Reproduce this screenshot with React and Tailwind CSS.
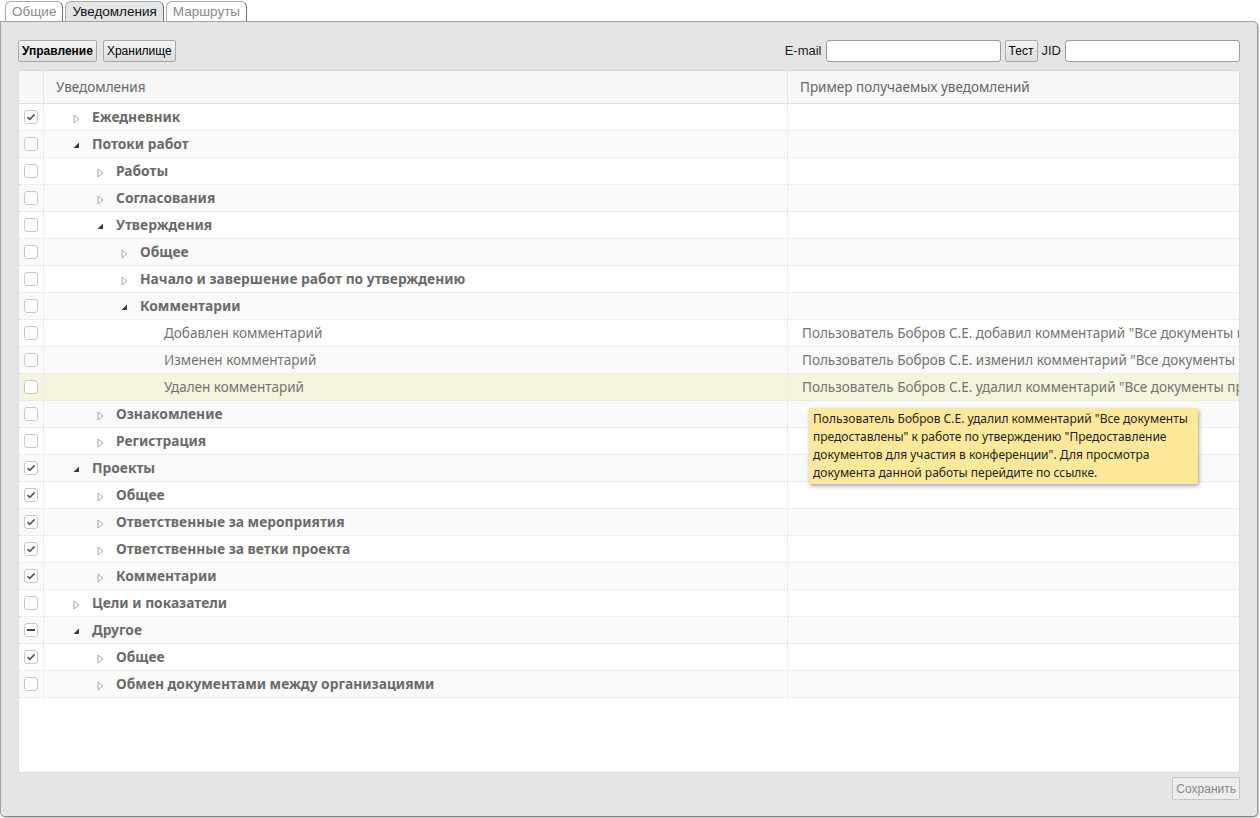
import React from "react";

const rows = [
  { t: "Ежедневник", l: 0, s: "c", ck: "y" },
  { t: "Потоки работ", l: 0, s: "e", ck: "n" },
  { t: "Работы", l: 1, s: "c", ck: "n" },
  { t: "Согласования", l: 1, s: "c", ck: "n" },
  { t: "Утверждения", l: 1, s: "e", ck: "n" },
  { t: "Общее", l: 2, s: "c", ck: "n" },
  { t: "Начало и завершение работ по утверждению", l: 2, s: "c", ck: "n" },
  { t: "Комментарии", l: 2, s: "e", ck: "n" },
  { t: "Добавлен комментарий", l: 3, s: "leaf", ck: "n", ex: "Пользователь Бобров С.Е. добавил комментарий \"Все документы предоставлены\" к работе по утверждению" },
  { t: "Изменен комментарий", l: 3, s: "leaf", ck: "n", ex: "Пользователь Бобров С.Е. изменил комментарий \"Все документы предоставлены\" к работе по утверждению" },
  { t: "Удален комментарий", l: 3, s: "leaf", ck: "n", hl: true, ex: "Пользователь Бобров С.Е. удалил комментарий \"Все документы предоставлены\" к работе по утверждению" },
  { t: "Ознакомление", l: 1, s: "c", ck: "n" },
  { t: "Регистрация", l: 1, s: "c", ck: "n" },
  { t: "Проекты", l: 0, s: "e", ck: "y" },
  { t: "Общее", l: 1, s: "c", ck: "y" },
  { t: "Ответственные за мероприятия", l: 1, s: "c", ck: "y" },
  { t: "Ответственные за ветки проекта", l: 1, s: "c", ck: "y" },
  { t: "Комментарии", l: 1, s: "c", ck: "y" },
  { t: "Цели и показатели", l: 0, s: "c", ck: "n" },
  { t: "Другое", l: 0, s: "e", ck: "p" },
  { t: "Общее", l: 1, s: "c", ck: "y" },
  { t: "Обмен документами между организациями", l: 1, s: "c", ck: "n" },
];

const padCls = ["pl-[29px]", "pl-[53px]", "pl-[77px]", "pl-[101px]"];

function Check({ v }) {
  return (
    <span className="w-[14px] h-[14px] rounded-[3px] border border-[#c8c8c8] bg-white flex items-center justify-center">
      {v === "y" && (
        <svg width="10" height="8" viewBox="0 0 10 8">
          <path d="M1.5 4.2 L3.8 6.3 L8.6 1.4" fill="none" stroke="#555" strokeWidth="1.6" />
        </svg>
      )}
      {v === "p" && <span className="w-[8px] h-[2px] bg-[#444]" />}
    </span>
  );
}

function Tri({ s }) {
  if (s === "leaf") return <span className="w-[19px] shrink-0" />;
  return (
    <span className="w-[19px] shrink-0 flex items-center pt-[3px]">
      {s === "c" ? (
        <svg width="7" height="10" viewBox="0 0 7 10">
          <polygon points="1,1 6,5 1,9" fill="#fff" stroke="#a6a6a6" strokeWidth="1" />
        </svg>
      ) : (
        <svg width="7" height="7" viewBox="0 0 7 7">
          <polygon points="6,0.5 6,6 0.5,6" fill="#3a3a3a" />
        </svg>
      )}
    </span>
  );
}

function Tab({ label, active }) {
  return (
    <div
      className={
        "h-[20px] px-[6px] flex items-center rounded-t-[6px] border border-b-0 border-[#a8a8a8] border-r-[#6f6f6f] text-[13.5px] leading-none " +
        (active ? "bg-[#e4e5e7] text-[#111]" : "bg-white text-[#8a8a8a]")
      }
    >
      {label}
    </div>
  );
}

export default function App() {
  return (
    <div className="w-[1260px] h-[818px] bg-white flex flex-col font-['Liberation_Sans',Arial,sans-serif] relative">
      <div className="h-[21px] flex items-end gap-[2px] pl-[5px] shrink-0">
        <Tab label="Общие" />
        <Tab label="Уведомления" active />
        <Tab label="Маршруты" />
      </div>
      <div className="flex-1 mr-[2px] mb-[1px] bg-[#e4e5e7] border border-[#a3a3a3] border-b-[#8a8a8a] border-r-[#9a9a9a] rounded-tr-[5px] rounded-b-[5px] shadow-[1px_1px_1px_rgba(0,0,0,0.25)] flex flex-col pl-[17px] pr-[17px] pt-[18px] pb-[16px]">
        <div className="flex items-center justify-between h-[22px] shrink-0">
          <div className="flex gap-[6px]">
            <button className="h-[22px] px-[3px] text-[12px] font-bold text-black border border-[#a9a9a9] rounded-[2px] bg-gradient-to-b from-[#f4f4f4] to-[#dcdcdc]">
              Управление
            </button>
            <button className="h-[22px] px-[3px] text-[12px] text-black border border-[#a9a9a9] rounded-[2px] bg-gradient-to-b from-[#f4f4f4] to-[#dcdcdc]">
              Хранилище
            </button>
          </div>
          <div className="flex items-center text-[13px] text-[#222]">
            <span className="mr-[4px]">E-mail</span>
            <input className="w-[175px] h-[22px] bg-white border border-[#9c9c9c] rounded-[3px] outline-none" />
            <button className="ml-[4px] h-[22px] w-[33px] text-[12px] text-black border border-[#a9a9a9] rounded-[2px] bg-gradient-to-b from-[#f4f4f4] to-[#dcdcdc]">
              Тест
            </button>
            <span className="ml-[4px] mr-[4px]">JID</span>
            <input className="w-[175px] h-[22px] bg-white border border-[#9c9c9c] rounded-[3px] outline-none" />
          </div>
        </div>

        <div className="mt-[8px] flex-1 bg-white border border-[#dcdcdc] rounded-[3px] flex flex-col overflow-hidden font-['Noto_Sans','Open_Sans',sans-serif] text-[13.5px]">
          <div className="h-[33px] shrink-0 flex bg-[#f7f7f7] border-b border-[#dedede] text-[#666]">
            <div className="w-[25px] shrink-0 border-r border-[#e4e4e4]" />
            <div className="w-[744px] shrink-0 border-r border-[#e4e4e4] flex items-center pl-[12px]">Уведомления</div>
            <div className="flex-1 flex items-center pl-[12px]">Пример получаемых уведомлений</div>
          </div>
          {rows.map((r, i) => (
            <div
              key={i}
              className={
                "h-[27px] shrink-0 flex border-b border-dotted border-[#e2e2e2] " +
                (r.hl ? "bg-[#f4f4df]" : i % 2 === 1 ? "bg-[#fafafa]" : "bg-white")
              }
            >
              <div className="w-[25px] shrink-0 border-r border-dotted border-[#e2e2e2] flex items-center pl-[5px]">
                <Check v={r.ck} />
              </div>
              <div className={"w-[744px] shrink-0 border-r border-dotted border-[#e2e2e2] flex items-center " + padCls[r.l]}>
                <Tri s={r.s} />
                <span className={r.s === "leaf" ? "text-[#737373]" : "font-bold text-[13.8px] text-[#6a6a6a]"}>{r.t}</span>
              </div>
              <div className="flex-1 min-w-0 overflow-hidden whitespace-nowrap flex items-center pl-[14px] text-[#737373]">
                {r.ex || ""}
              </div>
            </div>
          ))}
        </div>

        <div className="flex justify-end mt-[4px] shrink-0">
          <button className="h-[23px] px-[3px] text-[12px] text-[#8a8a8a] border border-[#c6c6c6] rounded-[2px] bg-[#ececec]">
            Сохранить
          </button>
        </div>
      </div>

      <div className="absolute left-[809px] top-[408px] w-[389px] bg-[#fce89a] shadow-[1px_2px_4px_rgba(0,0,0,0.35)] px-[4px] py-[2px] font-['Noto_Sans','Open_Sans',sans-serif] text-[12px] leading-[18px] text-[#1e1e1e]">
        Пользователь Бобров С.Е. удалил комментарий "Все документы предоставлены" к работе по утверждению "Предоставление документов для участия в конференции". Для просмотра документа данной работы перейдите по ссылке.
      </div>
    </div>
  );
}
